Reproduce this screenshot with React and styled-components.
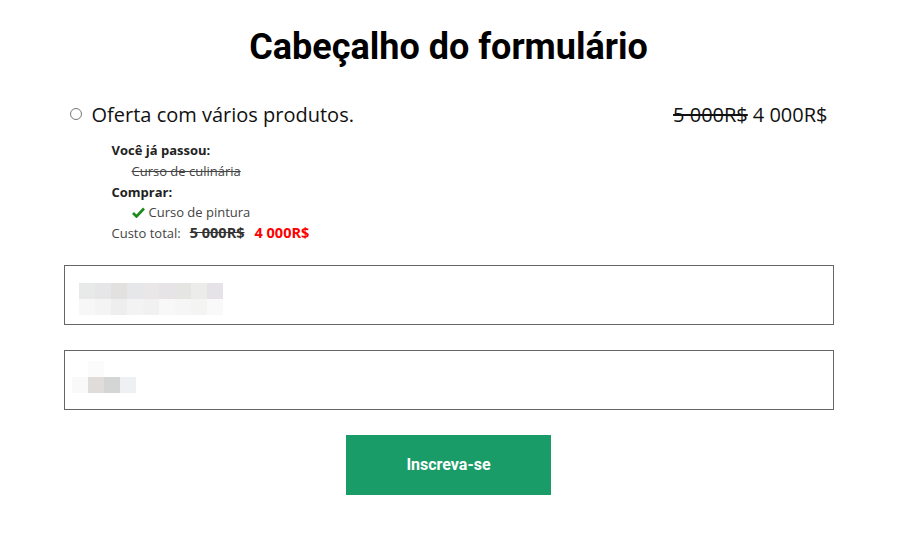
import React from "react";
import styled, { createGlobalStyle } from "styled-components";

const GlobalStyle = createGlobalStyle`
  *, *::before, *::after { box-sizing: border-box; }
  body {
    margin: 0;
    background: #fff;
    font-family: "Open Sans", sans-serif;
    color: #222;
  }
`;

const Page = styled.div`
  width: 897px;
  display: flex;
  flex-direction: column;
  align-items: center;
  padding-top: 25px;
`;

const Title = styled.h1`
  margin: 0;
  font-family: Roboto, sans-serif;
  font-weight: 700;
  font-size: 36px;
  line-height: 44px;
  color: #000;
`;

const Form = styled.form`
  width: 770px;
  margin-top: 30px;
  display: flex;
  flex-direction: column;
`;

const OfferRow = styled.label`
  display: flex;
  align-items: center;
  padding: 0 6px;
  height: 30px;
`;

const Radio = styled.span`
  width: 12px;
  height: 12px;
  border: 1px solid #777;
  border-radius: 50%;
  margin-right: 10px;
`;

const OfferName = styled.span`
  font-size: 20px;
  color: #111;
  flex: 1;
`;

const Price = styled.span`
  font-size: 20px;
  color: #111;
`;

const OldPrice = styled.s`
  margin-right: 5px;
`;

const Details = styled.div`
  padding-left: 48px;
  margin-top: 11px;
  font-size: 13px;
  line-height: 20.8px;
  color: #444;
`;

const Heading = styled.div`
  font-weight: 700;
  color: #222;
`;

const Item = styled.div`
  padding-left: 20px;
  display: flex;
  align-items: center;
  gap: 4px;
  text-decoration: ${(p) => (p.$done ? "line-through" : "none")};
`;

const Total = styled.div`
  display: flex;
  align-items: baseline;
  gap: 9px;
`;

const TotalOld = styled.s`
  font-weight: 700;
  font-size: 14.5px;
  color: #333;
  margin-right: 1px;
`;

const TotalNew = styled.span`
  font-weight: 700;
  font-size: 14.5px;
  color: #f00;
`;

const Field = styled.div`
  height: 60px;
  border: 1px solid #666;
  margin-top: ${(p) => p.$gap}px;
  display: flex;
  align-items: flex-start;
  padding-left: ${(p) => p.$pad}px;
  padding-top: ${(p) => p.$top}px;
`;

const Pixels = styled.div`
  display: grid;
  grid-template-columns: repeat(${(p) => p.$cols}, 16px);
  grid-auto-rows: 16px;
`;

const Cell = styled.span`
  background: ${(p) => p.$c};
`;

const Button = styled.button`
  align-self: center;
  margin-top: 25px;
  width: 205px;
  height: 60px;
  border: none;
  background: #1a9c68;
  color: #fff;
  font-family: Roboto, sans-serif;
  font-weight: 700;
  font-size: 16px;
  cursor: pointer;
`;

const Check = () => (
  <svg width="13" height="11" viewBox="0 0 13 11">
    <path d="M1 6 L4.5 9.5 L12 1.5" fill="none" stroke="#1a8a1a" strokeWidth="2.6" />
  </svg>
);

const nameCells = [
  "#e8e9e9", "#e6e6e8", "#e2e1df", "#e6e7e9", "#e9e7e8", "#e6e4e7", "#e5e5e3", "#ecedeb", "#e5e3e7",
  "#f7f7f7", "#f4f4f4", "#eeeeee", "#f3f3f3", "#f1f1f1", "#f8f8f8", "#f6f6f6", "#f4f4f2", "#f9f9f9",
];

const mailCells = [
  "#fff", "#fbfbfb", "#fff", "#fff",
  "#f9f9f9", "#e0dcdc", "#d3d6d5", "#eff0f2",
];

export default function App() {
  return (
    <>
      <GlobalStyle />
      <Page>
        <Title>Cabeçalho do formulário</Title>
        <Form onSubmit={(e) => e.preventDefault()}>
          <OfferRow>
            <Radio />
            <OfferName>Oferta com vários produtos.</OfferName>
            <Price>
              <OldPrice>5 000R$</OldPrice>4 000R$
            </Price>
          </OfferRow>
          <Details>
            <Heading>Você já passou:</Heading>
            <Item $done>Curso de culinária</Item>
            <Heading>Comprar:</Heading>
            <Item>
              <Check />
              Curso de pintura
            </Item>
            <Total>
              Custo total:
              <TotalOld>5 000R$</TotalOld>
              <TotalNew>4 000R$</TotalNew>
            </Total>
          </Details>
          <Field $gap={21} $pad={14} $top={17}>
            <Pixels $cols={9}>
              {nameCells.map((c, i) => (
                <Cell key={i} $c={c} />
              ))}
            </Pixels>
          </Field>
          <Field $gap={25} $pad={7} $top={10}>
            <Pixels $cols={4}>
              {mailCells.map((c, i) => (
                <Cell key={i} $c={c} />
              ))}
            </Pixels>
          </Field>
          <Button type="submit">Inscreva-se</Button>
        </Form>
      </Page>
    </>
  );
}
